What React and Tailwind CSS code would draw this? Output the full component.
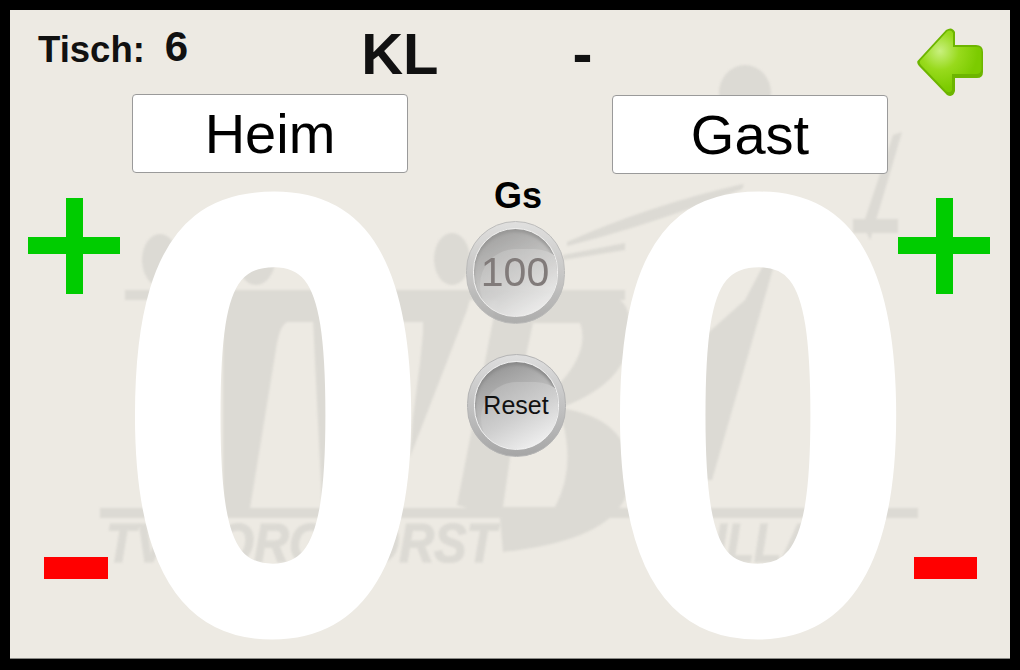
import React from "react";

function Watermark() {
  return (
    <svg className="absolute left-0 top-0 w-[1000px] h-[649px] blur-[1px]" viewBox="10 10 1000 649" fill="#dcdad4">
      <ellipse cx="160" cy="260" rx="18" ry="26" />
      <ellipse cx="256" cy="255" rx="20" ry="30" />
      <ellipse cx="452" cy="259" rx="18" ry="26" />
      <ellipse cx="745" cy="93" rx="26" ry="28" />
      <rect x="125" y="290" width="500" height="10" />
      <path d="M223 300H430V322H287Q280 326 277 343L250 508H223Z" />
      <path d="M313 320H400V505H322Z" />
      <path d="M423 300H470L467 310L410 457L413 417L420 363L423 333Z" />
      <path d="M497 300H620Q634 310 628 345Q622 385 560 408Q640 420 628 490Q615 540 503 552L500 518L457 505Z M533 323L520 383H560Q590 350 580 323Z M515 423L503 507H555Q575 470 563 423Z" fillRule="evenodd" />
      <rect x="100" y="508" width="818" height="10" />
      <path d="M765 262L745 300L700 340V480H712L775 262Z" />
      <path d="M902 132L893 135L863 225L870 240L885 190Z" />
      <rect x="853" y="219" width="45" height="14" />
      <path d="M567 242Q650 205 743 184Q745 187 740 190Q650 225 567 246Z" />
      <path d="M563 255L625 243V250L563 260Z" />
      <text x="106" y="562" stroke="#dcdad4" strokeWidth="1.2" fontFamily="'Liberation Sans', sans-serif" fontStyle="italic" fontWeight="700" fontSize="55" textLength="390" lengthAdjust="spacingAndGlyphs">TV DORGHORST</text>
      <text x="714" y="562" stroke="#dcdad4" strokeWidth="1.2" fontFamily="'Liberation Sans', sans-serif" fontStyle="italic" fontWeight="700" fontSize="55" textLength="100" lengthAdjust="spacingAndGlyphs">ILLA</text>
    </svg>
  );
}

function Plus() {
  return (
    <svg width="92" height="96" viewBox="0 0 92 96" className="block shrink-0 mt-[9px]" fill="#00cc00">
      <rect x="0" y="39" width="92" height="17" />
      <rect x="38" y="0" width="17" height="96" />
    </svg>
  );
}

function Arrow() {
  return (
    <svg width="68" height="71" viewBox="916 27 68 71" className="block shrink-0 ml-auto mr-[26px] mt-[17px]">
      <defs>
        <radialGradient id="arrowFill" gradientUnits="userSpaceOnUse" cx="940" cy="51" r="38">
          <stop offset="0" stopColor="#c9f07f" />
          <stop offset="0.5" stopColor="#98da1c" />
          <stop offset="1" stopColor="#7ccb00" />
        </radialGradient>
      </defs>
      <path d="M917.5 61L946 30Q952 26 955 32V45H976Q983 45 983 52V72Q983 78 977 78H955V91Q953 98 947 95L919 66Q916.5 63 917.5 61Z" fill="#6db500" />
      <path d="M920 61L947 31.5Q951 29 953 33V47H977Q981.5 47 981.5 52V69Q981 74 976 74H952V90Q950 94 946 91L921 65Q919 63 920 61Z" fill="url(#arrowFill)" />
    </svg>
  );
}

function RoundButton({ children, textClass, ringClass }) {
  return (
    <button className={"w-[99px] h-[103px] rounded-full p-[6px] border border-[#b4b4b4] bg-[linear-gradient(180deg,#dedede,#a6a6a6)] " + ringClass}>
      <div className="relative w-full h-full rounded-full overflow-hidden border border-[#f2f2f2] bg-[linear-gradient(155deg,#969696_10%,#c4c4c4_55%,#fafafa_90%)] shadow-[inset_0_3px_3px_#8a8a8a] flex items-center justify-center">
        <div className="absolute left-[6px] top-[20px] w-[90px] h-[72px] rounded-full bg-[linear-gradient(150deg,#aeaeae,#cfcfcf_45%,#f6f6f6_85%)]"></div>
        <span className={"relative font-['Liberation_Sans',Arial,sans-serif] " + textClass}>{children}</span>
      </div>
    </button>
  );
}

const zeroClass = "w-[345px] shrink-0 text-center text-white font-bold text-[620px] leading-[450px] scale-x-[0.909] [-webkit-text-stroke:9px_#fff]";

export default function App() {
  return (
    <div className="w-[1020px] h-[670px] overflow-hidden bg-black pt-[10px] px-[10px] pb-[11px] font-['Liberation_Sans',Arial,sans-serif]">
      <div className="relative w-full h-full bg-[#edeae3] border-b border-[#8a8a86]">
        <Watermark />
        <div className="relative flex flex-col h-full">
          <header className="flex items-start h-[84px] text-[#111]">
            <div className="ml-[28px] mt-[18px] text-[36.5px] leading-[44px] font-bold">Tisch:</div>
            <div className="ml-[20px] mt-[12px] text-[42px] leading-[50px] font-bold">6</div>
            <div className="ml-[173px] mt-[9px] text-[58px] leading-[70px] font-bold">KL</div>
            <div className="ml-[134px] mt-[9px] text-[60px] leading-[70px] font-bold">-</div>
            <Arrow />
          </header>
          <main className="flex flex-1 items-start">
            <section className="w-[446px]">
              <div className="ml-[122px] w-[276px] h-[79px] bg-white border border-[#9a9a9a] rounded-[4px] flex items-center justify-center text-[56px] text-black">Heim</div>
              <div className="mt-[16px] h-[450px] pl-[18px] flex">
                <div className="w-[91px] shrink-0 flex flex-col justify-between pb-[60px]">
                  <Plus />
                  <div className="ml-[16px] w-[64px] h-[22px] bg-[#ff0000]"></div>
                </div>
                <div className={"ml-[-18px] " + zeroClass}>0</div>
              </div>
            </section>
            <section className="w-[120px] flex flex-col items-center">
              <div className="mt-[80px] text-[36px] leading-[44px] font-bold text-black ml-[4px]">Gs</div>
              <div className="mt-[3px] ml-[-2px] flex flex-col items-center gap-[30px]">
                <RoundButton textClass="text-[41px] text-[#6f6868]" ringClass="opacity-85">100</RoundButton>
                <RoundButton textClass="text-[25px] text-[#111]" ringClass="ml-[2px]">Reset</RoundButton>
              </div>
            </section>
            <section className="w-[434px] pt-[1px]">
              <div className="ml-[36px] w-[276px] h-[79px] bg-white border border-[#9a9a9a] rounded-[4px] flex items-center justify-center text-[56px] text-black">Gast</div>
              <div className="mt-[15px] h-[450px] pl-[10px] flex">
                <div className={zeroClass}>0</div>
                <div className="ml-[-33px] w-[92px] shrink-0 flex flex-col justify-between pb-[60px]">
                  <Plus />
                  <div className="ml-[16px] w-[63px] h-[22px] bg-[#ff0000]"></div>
                </div>
              </div>
            </section>
          </main>
        </div>
      </div>
    </div>
  );
}
